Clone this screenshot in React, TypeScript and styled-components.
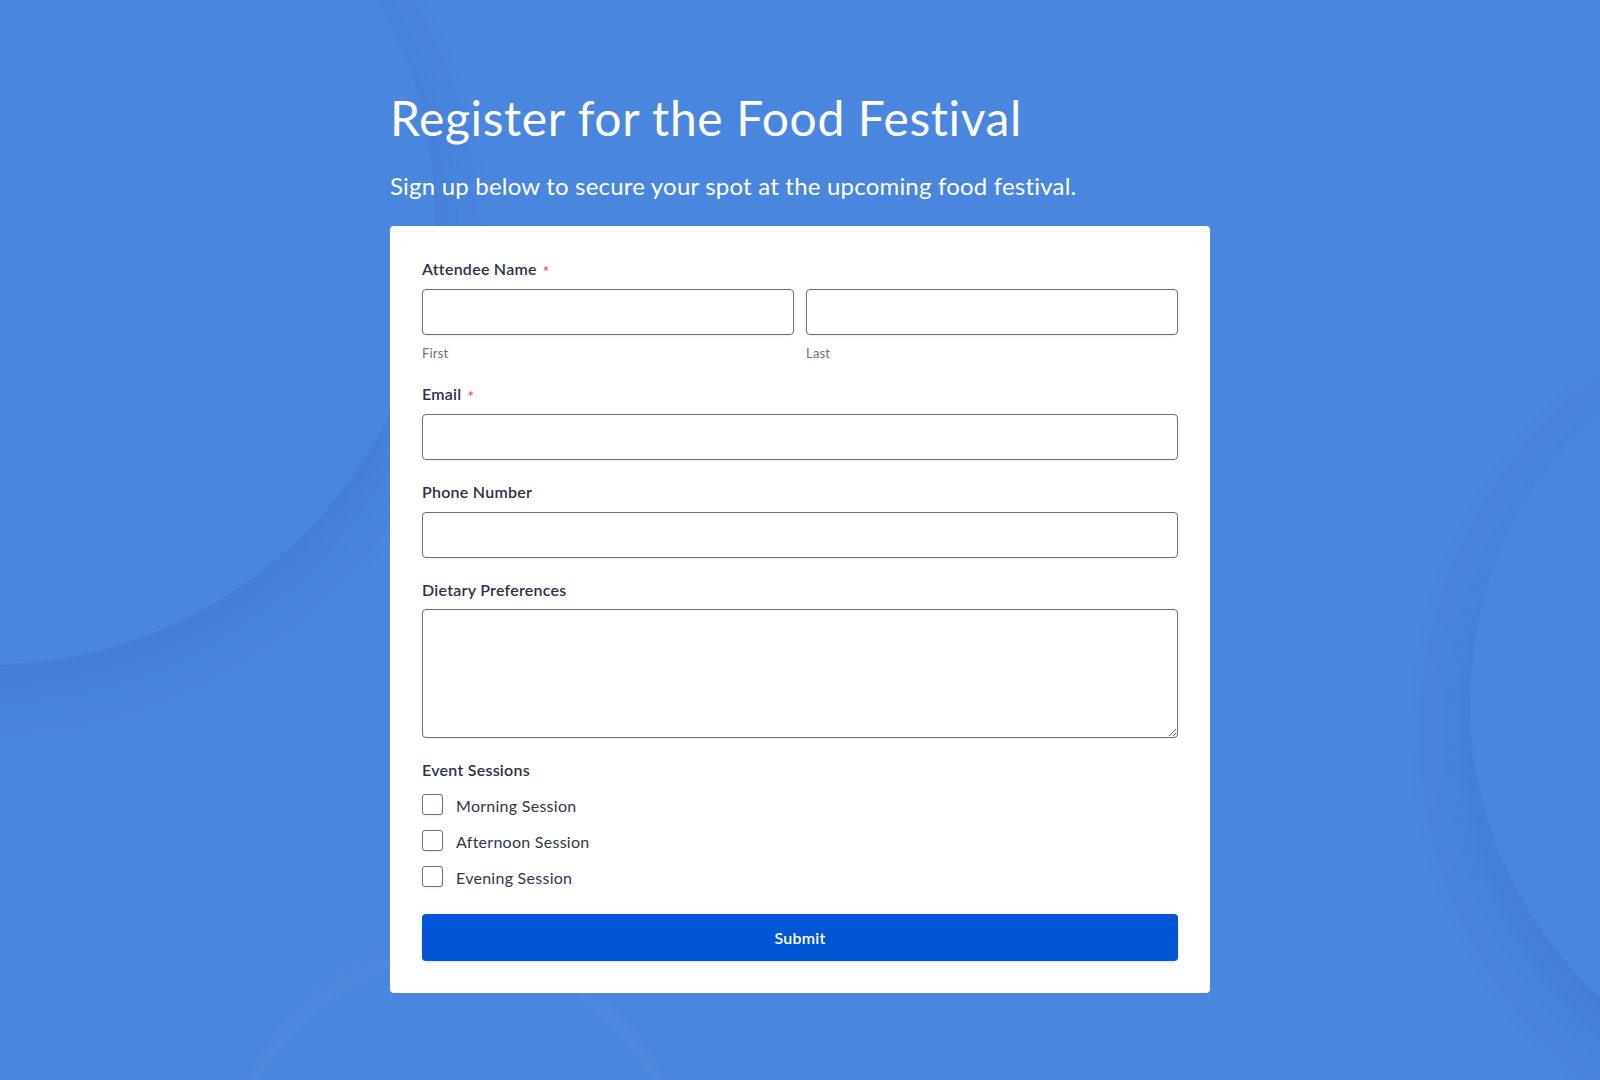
import React from "react";
import styled, { createGlobalStyle } from "styled-components";

const GlobalStyle = createGlobalStyle`
  html, body {
    margin: 0;
    padding: 0;
    background: #4a85de;
  }
  body {
    font-family: Lato, "Open Sans", "Liberation Sans", sans-serif;
    -webkit-font-smoothing: antialiased;
  }
  * { box-sizing: border-box; }
`;

const Page = styled.div`
  position: relative;
  min-height: 1080px;
  overflow: hidden;
  background: #4a85de;
  padding: 89px 0 60px;
`;

const Decor = styled.div<{ $left: number; $top: number; $size: number; $shadow: string }>`
  position: absolute;
  left: ${(p) => p.$left}px;
  top: ${(p) => p.$top}px;
  width: ${(p) => p.$size}px;
  height: ${(p) => p.$size}px;
  border-radius: 50%;
  background: #4a85de;
  box-shadow: ${(p) => p.$shadow};
  pointer-events: none;
  z-index: 0;
`;

const Container = styled.main`
  position: relative;
  z-index: 1;
  width: 820px;
  margin: 0 auto;
`;

const Title = styled.h1`
  margin: 0;
  font-size: 48px;
  line-height: 57.6px;
  font-weight: 400;
  letter-spacing: 0.6px;
  color: #ffffff;
`;

const Subtitle = styled.p`
  margin: 21px 0 0;
  font-size: 24px;
  line-height: 36px;
  font-weight: 400;
  letter-spacing: 0.2px;
  color: #ffffff;
`;

const Card = styled.form`
  margin-top: 22px;
  background: #ffffff;
  border-radius: 4px;
  padding: 31px 32px 32px;
  display: flex;
  flex-direction: column;
`;

const Field = styled.div`
  display: flex;
  flex-direction: column;
  margin-bottom: 20px;
`;

const Label = styled.label<{ $gap?: number }>`
  font-size: 16px;
  line-height: 24px;
  font-weight: 600;
  letter-spacing: 0.25px;
  color: #2a3346;
  margin-bottom: ${(p) => p.$gap ?? 8}px;
  display: flex;
  align-items: center;
`;

const Required = styled.span`
  color: #d9382b;
  font-size: 15px;
  line-height: 1;
  font-weight: 400;
  margin-left: 6px;
  position: relative;
  top: 3px;
`;

const NameGrid = styled.div`
  display: grid;
  grid-template-columns: 1fr 1fr;
  column-gap: 12px;
`;

const SubField = styled.div`
  display: flex;
  flex-direction: column;
`;

const TextInput = styled.input`
  display: block;
  width: 100%;
  height: 46px;
  border: 1px solid #6b7080;
  border-radius: 4px;
  background: #ffffff;
  box-shadow: 0 1px 2px rgba(30, 40, 60, 0.08);
  padding: 0 12px;
  font-family: inherit;
  font-size: 16px;
  color: #2a3346;
  outline: none;
`;

const TextArea = styled.textarea`
  display: block;
  width: 100%;
  height: 129px;
  border: 1px solid #6b7080;
  border-radius: 4px;
  background: #ffffff;
  box-shadow: 0 1px 2px rgba(30, 40, 60, 0.08);
  padding: 10px 12px;
  font-family: inherit;
  font-size: 16px;
  color: #2a3346;
  outline: none;
  resize: vertical;
`;

const SubLabel = styled.span`
  margin-top: 9px;
  font-size: 13px;
  line-height: 18px;
  letter-spacing: 0.2px;
  color: #6b7080;
`;

const Options = styled.div`
  display: flex;
  flex-direction: column;
  gap: 8px;
  margin-top: 2px;
`;

const OptionRow = styled.label`
  display: flex;
  align-items: flex-start;
  gap: 13px;
  height: 28px;
  cursor: pointer;
`;

const CheckBox = styled.input`
  appearance: none;
  -webkit-appearance: none;
  margin: 2px 0 0;
  width: 21px;
  height: 21px;
  border: 1px solid #6b7080;
  border-radius: 3px;
  background: #ffffff;
  box-shadow: 0 1px 2px rgba(30, 40, 60, 0.08);
  flex: none;
`;

const OptionText = styled.span`
  font-size: 16px;
  line-height: 28px;
  letter-spacing: 0.27px;
  color: #2f384b;
`;

const SubmitButton = styled.button`
  margin-top: 2px;
  height: 47px;
  width: 100%;
  border: none;
  border-radius: 4px;
  background: #0056d4;
  color: #ffffff;
  font-family: inherit;
  font-size: 16px;
  font-weight: 600;
  letter-spacing: 0.2px;
  box-shadow: 0 1px 3px rgba(0, 30, 90, 0.12);
  cursor: pointer;
`;

const sessions = ["Morning Session", "Afternoon Session", "Evening Session"];

export default function App() {
  return (
    <>
      <GlobalStyle />
      <Page>
        <Decor
          $left={-459}
          $top={-229}
          $size={894}
          $shadow="0 24px 60px rgba(20, 60, 140, 0.13)"
        />
        <Decor
          $left={1470}
          $top={305}
          $size={796}
          $shadow="0 30px 70px rgba(20, 60, 140, 0.12)"
        />
        <Decor
          $left={236}
          $top={960}
          $size={440}
          $shadow="0 -6px 30px rgba(255, 255, 255, 0.05)"
        />
        <Container>
          <Title>Register for the Food Festival</Title>
          <Subtitle>Sign up below to secure your spot at the upcoming food festival.</Subtitle>
          <Card onSubmit={(e) => e.preventDefault()}>
            <Field>
              <Label>
                Attendee Name<Required>*</Required>
              </Label>
              <NameGrid>
                <SubField>
                  <TextInput type="text" aria-label="First" />
                  <SubLabel>First</SubLabel>
                </SubField>
                <SubField>
                  <TextInput type="text" aria-label="Last" />
                  <SubLabel>Last</SubLabel>
                </SubField>
              </NameGrid>
            </Field>
            <Field>
              <Label>
                Email<Required>*</Required>
              </Label>
              <TextInput type="email" />
            </Field>
            <Field>
              <Label>Phone Number</Label>
              <TextInput type="tel" />
            </Field>
            <Field>
              <Label $gap={7}>Dietary Preferences</Label>
              <TextArea />
            </Field>
            <Field>
              <Label>Event Sessions</Label>
              <Options>
                {sessions.map((s) => (
                  <OptionRow key={s}>
                    <CheckBox type="checkbox" />
                    <OptionText>{s}</OptionText>
                  </OptionRow>
                ))}
              </Options>
            </Field>
            <SubmitButton type="submit">Submit</SubmitButton>
          </Card>
        </Container>
      </Page>
    </>
  );
}
